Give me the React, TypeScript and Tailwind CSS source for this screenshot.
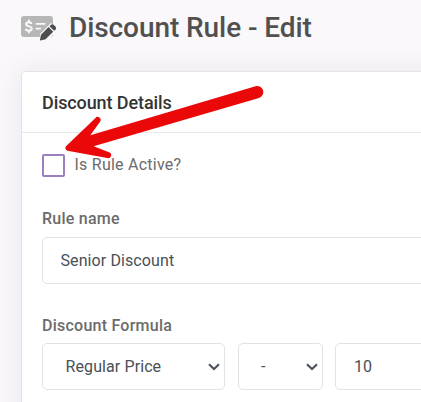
import React, { useState } from 'react';

function MoneyCheckEditIcon() {
  return (
    <svg width="36" height="26" viewBox="0 0 36 26" className="shrink-0" aria-hidden="true">
      <rect x="0" y="0" width="32" height="21" rx="3" fill="#b6b6b7" />
      {/* Dollar sign */}
      <g fill="none" stroke="#faf8fb" strokeWidth="2" strokeLinecap="round">
        <path d="M10.3 7.1C9.5 6.5 8.7 6.3 7.7 6.3C6.2 6.3 5.1 7.1 5.1 8.3C5.1 11.1 10.8 9.7 10.8 12.7C10.8 13.9 9.6 14.7 8 14.7C6.8 14.7 5.8 14.3 4.9 13.6" />
        <path d="M7.9 4.5V6.2M7.9 14.8V16.5" />
        <path d="M15.4 7.8H23.8M15.4 12.6H19.2" strokeWidth="1.8" />
      </g>
      {/* Pencil */}
      <path d="M17.8 25.8L19.3 17.7L29.9 7.1L36 13.2L27 24.2Z" fill="#faf8fb" />
      <path d="M27.6 11.1L32.2 15.7L24.6 23.3L19.7 24.4Q18.8 24.5 19 23.6L20 18.7Z" fill="#4d4d4f" />
      <path d="M28.5 10.2L30 8.8Q31.3 7.6 32.6 8.8L34.6 10.8Q35.8 12.1 34.6 13.4L33.1 14.8Z" fill="#4d4d4f" />
    </svg>
  );
}

function ChevronDown() {
  return (
    <svg width="12" height="8" viewBox="0 0 12 8" className="shrink-0" aria-hidden="true">
      <path d="M1 1.2L6 6L11 1.2" fill="none" stroke="#495057" strokeWidth="2" />
    </svg>
  );
}

function Arrow() {
  return (
    <svg
      width="210"
      height="80"
      viewBox="60 82 210 80"
      className="pointer-events-none absolute top-[82px] left-[60px]"
      aria-hidden="true"
    >
      <path
        d="M90.3 135.2L255.5 86.3A6 6 0 0 1 259 97.9L93.6 146.2L109 152.2A3 3 0 0 1 107.2 158L67.5 150.7A2.8 2.8 0 0 1 66 146.2L95.2 118.2A3 3 0 0 1 100 121.8Z"
        fill="#eb0808"
      />
    </svg>
  );
}

export default function App() {
  const [active, setActive] = useState(false);
  const [ruleName, setRuleName] = useState('Senior Discount');
  const [amount, setAmount] = useState('10');

  return (
    <div className="relative h-[402px] w-[421px] overflow-hidden bg-[#faf8fb] font-['Roboto',sans-serif] text-[#6b6b6b]">
      <header className="flex h-[71px] items-start pl-[21px]">
        <div className="pt-4">
          <MoneyCheckEditIcon />
        </div>
        <h1 className="ml-3 pt-2 text-[28px] leading-10 font-medium tracking-[-0.08px] whitespace-nowrap text-[#505050]">
          Discount Rule - Edit
        </h1>
      </header>

      <section className="ml-[21px] h-[500px] w-[600px] rounded-[4px] border border-[#e5e5e7] bg-white shadow-[0_0_28px_rgba(60,50,80,0.09)]">
        <div className="flex h-[61px] items-center border-b border-[#e9e9ea] pl-5">
          <h2 className="text-[18px] font-medium tracking-[-0.1px] text-[#333333]">Discount Details</h2>
        </div>

        <div className="pl-5">
          <label className="flex h-[44px] items-end">
            <input
              type="checkbox"
              checked={active}
              onChange={(e) => setActive(e.target.checked)}
              className="h-[23px] w-[23px] appearance-none rounded-[2px] border-2 border-[#9a7fc1] bg-white checked:bg-[#9a7fc1]"
            />
            <span className="ml-[9.5px] text-[16px] leading-6 tracking-[0.24px]">Is Rule Active?</span>
          </label>

          <div className="pt-[30px]">
            <label className="block h-[30px] text-[16px] leading-6 font-medium tracking-[0.24px]">Rule name</label>
            <input
              value={ruleName}
              onChange={(e) => setRuleName(e.target.value)}
              className="block h-[47px] w-[540px] rounded-[5px] border border-[#e2e2e4] bg-white px-[17.5px] text-[16px] tracking-[0.1px] text-[#495057] outline-none"
            />
          </div>

          <div className="pt-[30px]">
            <label className="block h-[29px] text-[16px] leading-6 font-medium tracking-[0.24px]">Discount Formula</label>
            <div className="flex text-[16px] text-[#495057]">
              <button className="flex h-[47px] w-[183px] items-center justify-between rounded-[5px] border border-[#e2e2e4] bg-white pr-1 pl-[22.5px]">
                <span className="tracking-[0.1px]">Regular Price</span>
                <ChevronDown />
              </button>
              <button className="ml-[13px] flex h-[47px] w-[85px] items-center justify-between rounded-[5px] border border-[#e2e2e4] bg-white pr-1 pl-[22px]">
                <span>-</span>
                <ChevronDown />
              </button>
              <input
                value={amount}
                onChange={(e) => setAmount(e.target.value)}
                className="ml-3 h-[47px] w-[183px] rounded-[5px] border border-[#e2e2e4] bg-white px-[18px] outline-none"
              />
            </div>
          </div>
        </div>
      </section>

      <Arrow />
    </div>
  );
}
